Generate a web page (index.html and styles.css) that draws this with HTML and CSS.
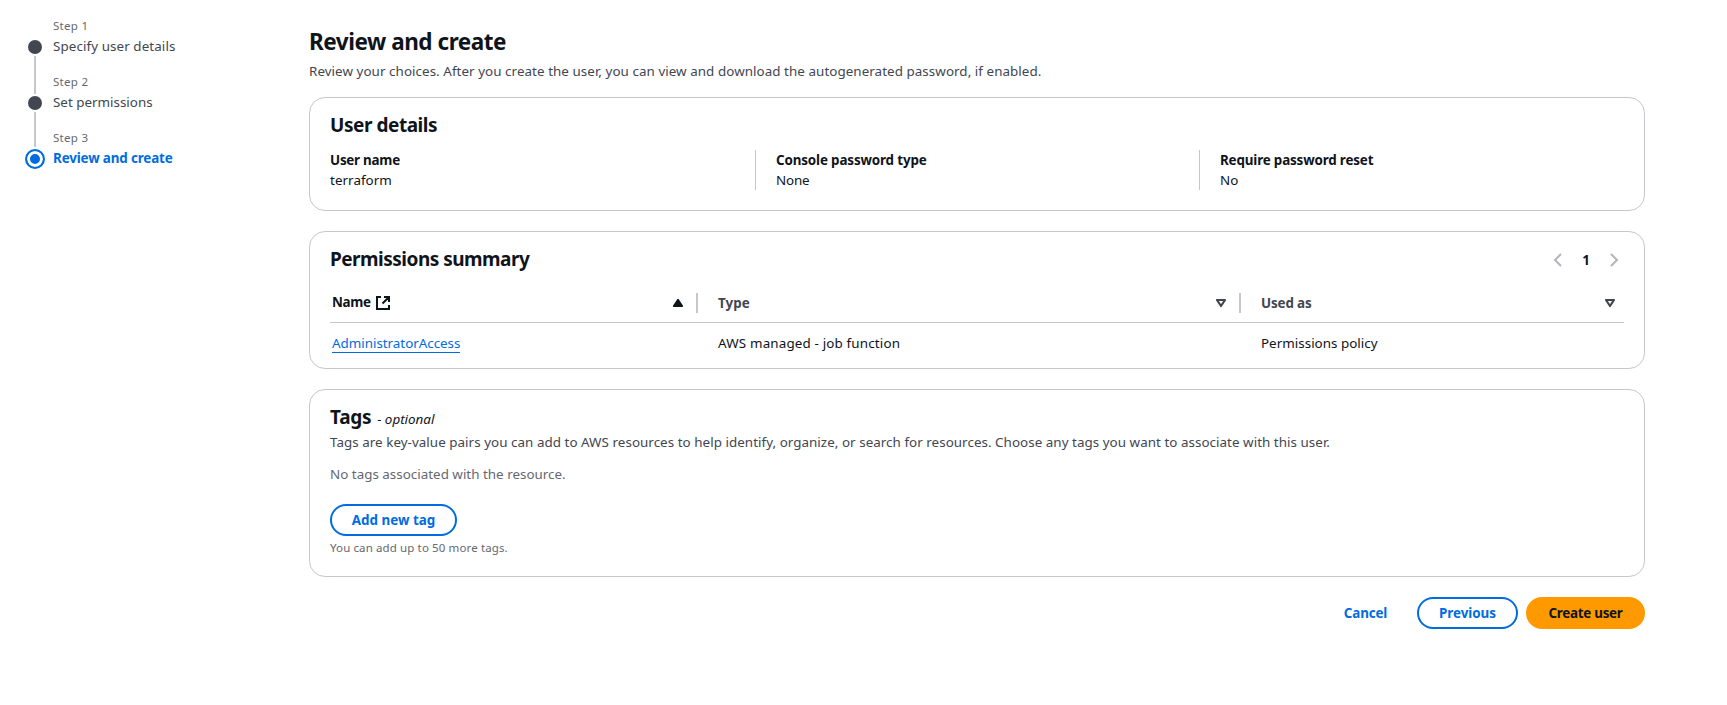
FILE: index.html
```
<!DOCTYPE html>
<html lang="en">
<head>
<meta charset="utf-8">
<title>Review and create</title>
<link rel="stylesheet" href="styles.css">
</head>
<body>
<div class="layout">
  <nav class="steps">
    <div class="step">
      <div class="track"><span class="dot"></span><span class="line"></span></div>
      <div class="step-text"><div class="step-label">Step 1</div><div class="step-title">Specify user details</div></div>
    </div>
    <div class="step">
      <div class="track"><span class="dot"></span><span class="line line-short"></span></div>
      <div class="step-text"><div class="step-label">Step 2</div><div class="step-title t-perm">Set permissions</div></div>
    </div>
    <div class="step">
      <div class="track"><span class="dot dot-active"></span></div>
      <div class="step-text"><div class="step-label">Step 3</div><div class="step-title active">Review and create</div></div>
    </div>
  </nav>
  <main class="main">
    <h1>Review and create</h1>
    <p class="subtitle">Review your choices. After you create the user, you can view and download the autogenerated password, if enabled.</p>

    <section class="card details">
      <h2 class="h-user">User details</h2>
      <div class="columns">
        <div class="column"><div class="key k-user">User name</div><div>terraform</div></div>
        <div class="column"><div class="key k-console">Console password type</div><div class="v-none">None</div></div>
        <div class="column"><div class="key k-reset">Require password reset</div><div>No</div></div>
      </div>
    </section>

    <section class="card permissions">
      <div class="card-head">
        <h2 class="h-perm">Permissions summary</h2>
        <div class="pager">
          <svg width="16" height="16" viewBox="0 0 16 16"><path d="M11 2 5 8l6 6"/></svg>
          <span class="page">1</span>
          <svg width="16" height="16" viewBox="0 0 16 16"><path d="m5 2 6 6-6 6"/></svg>
        </div>
      </div>
      <div class="row head">
        <div class="cell sorted"><span class="name">Name</span><svg class="external" width="16" height="16" viewBox="0 0 16 16"><path d="M6 2H2v12h12v-4M9 2h5v5M14 2 7.5 8.5"/></svg><svg class="caret" width="16" height="16" viewBox="0 0 16 16"><path class="solid" d="M4 11h8L8 5z"/></svg></div>
        <div class="cell"><span class="type">Type</span><svg class="caret" width="16" height="16" viewBox="0 0 16 16"><path d="M4 5h8l-4 6z"/></svg></div>
        <div class="cell"><span class="used">Used as</span><svg class="caret" width="16" height="16" viewBox="0 0 16 16"><path d="M4 5h8l-4 6z"/></svg></div>
      </div>
      <div class="row body">
        <div class="cell"><a class="link">AdministratorAccess</a></div>
        <div class="cell v-type">AWS managed - job function</div>
        <div class="cell v-policy">Permissions policy</div>
      </div>
    </section>

    <section class="card tags">
      <h2 class="h-tags">Tags<i>- optional</i></h2>
      <p class="desc">Tags are key-value pairs you can add to AWS resources to help identify, organize, or search for resources. Choose any tags you want to associate with this user.</p>
      <p class="empty">No tags associated with the resource.</p>
      <button class="btn add">Add new tag</button>
      <p class="hint">You can add up to 50 more tags.</p>
    </section>

    <div class="actions">
      <button class="btn plain">Cancel</button>
      <button class="btn previous">Previous</button>
      <button class="btn primary">Create user</button>
    </div>
  </main>
</div>
</body>
</html>
```
FILE: styles.css
```
* { box-sizing: border-box; }
body { margin: 0; background: #fff; color: #0f141a; font: 13.4px/20px "Noto Sans", "Open Sans", sans-serif; letter-spacing: 0.05px; }
h1, h2, p { margin: 0; }
.layout { display: flex; }

.steps { width: 309px; padding: 17px 0 0 25px; }
.step { display: flex; height: 56px; gap: 8px; }
.step-text { padding-top: 1px; }
.track { width: 20px; padding-top: 23px; display: flex; flex-direction: column; align-items: center; flex: none; }
.dot { width: 14px; height: 14px; border-radius: 50%; background: #424650; flex: none; }
.line { width: 2px; height: 38px; margin-top: 2px; background: #c6c6cd; flex: none; }
.line-short { height: 35px; }
.dot-active { width: 20px; height: 20px; margin-top: -3px; border: 2px solid #006ce0; background: #006ce0; box-shadow: inset 0 0 0 3px #fff; }
.step-label { font-size: 11.5px; line-height: 16px; color: #656871; letter-spacing: 0.3px; }
.step-title { margin-top: 2px; color: #424650; letter-spacing: 0.09px; }
.t-perm { letter-spacing: 0; }
.step-title.active { color: #006ce0; font-weight: 700; letter-spacing: -0.14px; }

.main { width: 1336px; padding-top: 27px; }
h1 { font-size: 22.5px; line-height: 30px; font-weight: 700; letter-spacing: -0.46px; }
.subtitle { margin-top: 4px; color: #424650; letter-spacing: 0.057px; }
.card { border: 1px solid #c6c6cd; border-radius: 16px; padding: 0 20px; margin-bottom: 20px; }
h2 { font-size: 19px; line-height: 24px; font-weight: 700; height: 24px; }
.h-user { letter-spacing: -0.45px; }
.h-perm { letter-spacing: -0.51px; }
.h-tags { letter-spacing: -0.3px; }
.details { margin-top: 16px; height: 114px; padding-top: 15px; }
.columns { display: flex; margin-top: 13px; }
.column { width: 425px; height: 40px; flex: none; }
.column + .column { width: 444px; border-left: 1px solid #c6c6cd; padding-left: 20px; }
.column:last-child { flex: 1; }
.key { font-weight: 700; }
.k-user { letter-spacing: -0.24px; }
.k-console { letter-spacing: -0.14px; }
.k-reset { letter-spacing: -0.16px; }
.v-none { letter-spacing: -0.2px; }

.permissions { height: 138px; padding-top: 15px; }
.card-head { display: flex; justify-content: space-between; height: 24px; }
.pager { display: flex; align-items: center; margin: 3px 2px 0 0; width: 72px; justify-content: space-between; height: 20px; }
.pager svg { fill: none; stroke: #b4b4bb; stroke-width: 2; }
.page { font-weight: 700; }
.row { display: grid; grid-template-columns: 367px 543px 384px; }
.head { height: 52px; padding-top: 22px; border-bottom: 1px solid #c6c6cd; }
.cell { display: flex; align-items: center; height: 20px; padding-left: 21px; }
.cell:first-child { padding-left: 2px; }
.head .cell { font-weight: 700; color: #424650; padding-right: 10px; }
.head .cell:not(:last-child) { border-right: 2px solid #c6c6cd; width: calc(100% + 1px); }
.head .cell:last-child { padding-right: 6px; }
.head .cell.sorted { color: #0f141a; }
.name { letter-spacing: -0.3px; padding-bottom: 2px; }
.used { letter-spacing: -0.15px; }
.external { margin-left: 4px; fill: none; stroke: #0f141a; stroke-width: 2; }
.caret { margin-left: auto; fill: none; stroke: #424650; stroke-width: 2.2; stroke-linejoin: round; }
.solid { fill: #0f141a; stroke: #0f141a; }
.body { padding-top: 10px; }
.link { color: #006ce0; letter-spacing: -0.02px; box-shadow: inset 0 -1px #006ce0; height: 20px; }
.v-type { letter-spacing: 0.16px; }
.v-policy { letter-spacing: 0.02px; }

.tags { height: 188px; padding-top: 15px; }
.h-tags i { font-size: 13.4px; font-weight: 400; letter-spacing: 0; margin-left: 6px; }
.desc { margin-top: 3px; color: #424650; letter-spacing: 0.042px; }
.empty { margin-top: 12px; color: #656871; letter-spacing: 0.01px; }
.btn { height: 32px; border: 2px solid #006ce0; border-radius: 20px; background: #fff; color: #006ce0; font: 700 13.4px/20px "Noto Sans", "Open Sans", sans-serif; padding: 0; text-align: center; }
.add { display: block; width: 127px; margin-top: 20px; letter-spacing: 0; }
.hint { margin-top: 4px; font-size: 11.5px; line-height: 16px; color: #656871; letter-spacing: 0.12px; }
.actions { display: flex; justify-content: flex-end; gap: 8px; }
.plain { width: 87px; border-color: transparent; letter-spacing: -0.15px; }
.previous { width: 101px; letter-spacing: -0.03px; }
.primary { width: 119px; background: #ff9900; border-color: #ff9900; color: #0f141a; letter-spacing: -0.27px; }
```
